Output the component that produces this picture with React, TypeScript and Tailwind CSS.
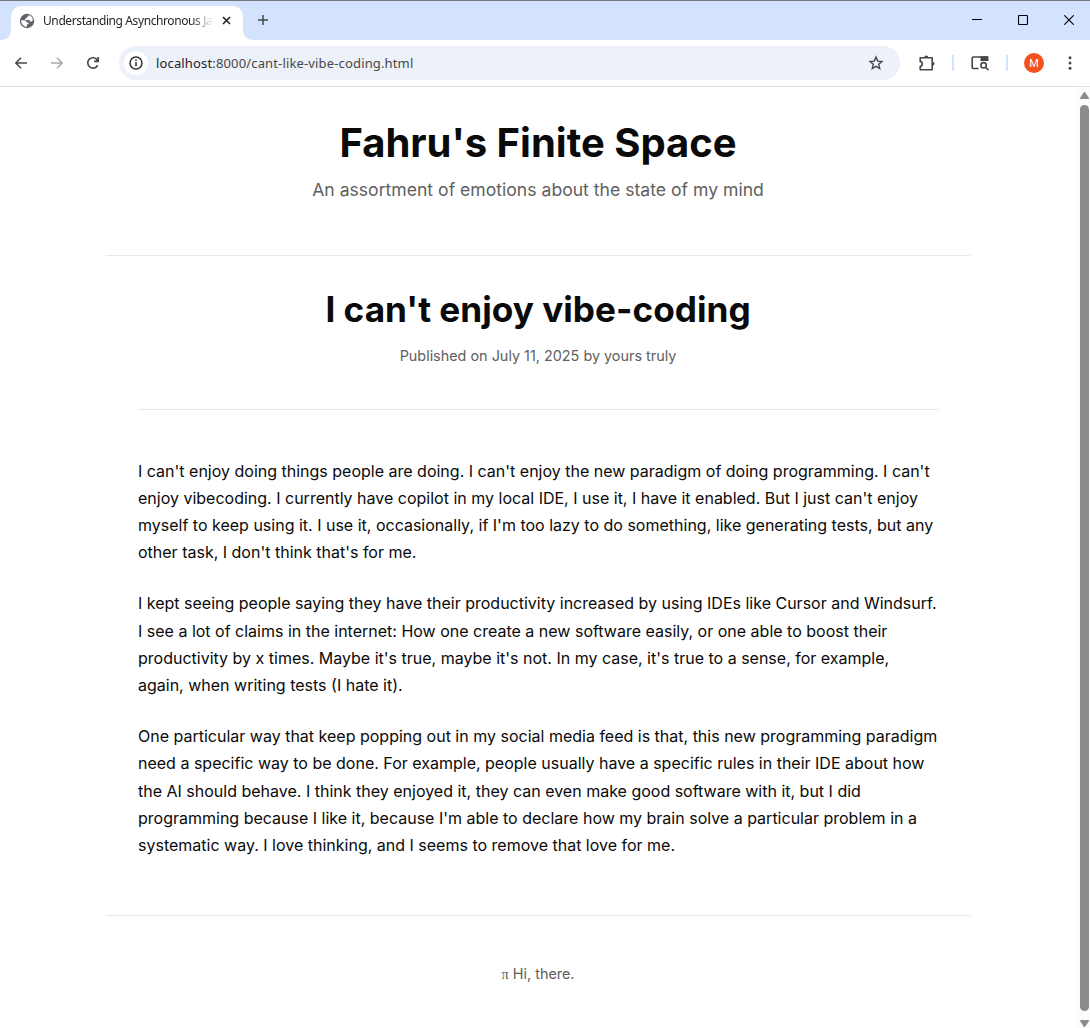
import React from "react";

const paragraphs: string[][] = [
  [
    "I can't enjoy doing things people are doing. I can't enjoy the new paradigm of doing programming. I can't",
    "enjoy vibecoding. I currently have copilot in my local IDE, I use it, I have it enabled. But I just can't enjoy",
    "myself to keep using it. I use it, occasionally, if I'm too lazy to do something, like generating tests, but any",
    "other task, I don't think that's for me.",
  ],
  [
    "I kept seeing people saying they have their productivity increased by using IDEs like Cursor and Windsurf.",
    "I see a lot of claims in the internet: How one create a new software easily, or one able to boost their",
    "productivity by x times. Maybe it's true, maybe it's not. In my case, it's true to a sense, for example,",
    "again, when writing tests (I hate it).",
  ],
  [
    "One particular way that keep popping out in my social media feed is that, this new programming paradigm",
    "need a specific way to be done. For example, people usually have a specific rules in their IDE about how",
    "the AI should behave. I think they enjoyed it, they can even make good software with it, but I did",
    "programming because I like it, because I'm able to declare how my brain solve a particular problem in a",
    "systematic way. I love thinking, and I seems to remove that love for me.",
  ],
];

function TabStrip() {
  return (
    <div className="flex h-10 shrink-0 items-end border-t border-[#747780] bg-[#d3e2fd]">
      <svg width="11" height="10" className="shrink-0" viewBox="0 0 11 10">
        <path d="M11 0v10H0c7 0 11-4 11-10z" fill="#fff" />
      </svg>
      <div className="flex h-[34px] w-[232px] items-center rounded-t-[10px] bg-white pr-[10px] pl-2 pb-[5px]">
        <svg width="16" height="16" viewBox="0 0 16 16" className="shrink-0">
          <circle cx="8" cy="8" r="7.2" fill="#5f6368" />
          <path d="M9.7 2.1c-.1 1.3-.8 1.9-2 1.9v1.5H6v1.4h3.4c1 0 1.5.6 1.5 1.5h1.2c1 0 1.6-.6 1.8-1.5A6 6 0 0 0 9.7 2.1z" fill="#fff" />
          <path d="M2.2 7.2h2.9c1.6 0 2.7.9 2.7 2.4h1.7v1.7H7.9v2.6A6 6 0 0 1 2.2 7.2z" fill="#fff" />
        </svg>
        <div className="ml-2 w-[169px] whitespace-nowrap bg-linear-to-r from-[#1f1f1f] from-88% to-[#1f1f1f]/5 bg-clip-text font-['Noto_Sans',sans-serif] text-[12px] leading-[18px] tracking-[-0.4px] text-transparent">
          Understanding Asynchronous Ja
        </div>
        <svg width="9" height="9" viewBox="0 0 9 9" className="ml-auto mr-[2px] shrink-0">
          <path d="M1 1l7 7M8 1L1 8" stroke="#202124" strokeWidth="1.6" />
        </svg>
      </div>
      <svg width="10" height="10" className="shrink-0" viewBox="0 0 10 10">
        <path d="M0 0v10h10C4 10 0 6 0 0z" fill="#fff" />
      </svg>
      <svg width="12" height="12" viewBox="0 0 12 12" className="mb-[14px] ml-1 shrink-0">
        <path d="M6 1v10M1 6h10" stroke="#44474d" strokeWidth="1.5" />
      </svg>
      <div className="mb-[15px] ml-auto mr-[16px] flex items-center gap-9 text-black">
        <svg width="10" height="11" viewBox="0 0 10 11"><path d="M0 5.5h10" stroke="currentColor" shapeRendering="crispEdges" /></svg>
        <svg width="10" height="10" viewBox="0 0 10 10"><rect x=".5" y=".5" width="9" height="9" rx="1" fill="none" stroke="currentColor" strokeWidth="1.1" /></svg>
        <svg width="10" height="10" viewBox="0 0 10 10"><path d="M.3.3l9.4 9.4m0-9.4L.3 9.7" stroke="currentColor" strokeWidth="1.1" /></svg>
      </div>
    </div>
  );
}

function Toolbar() {
  return (
    <div className="flex h-[47px] shrink-0 items-center border-b border-[#dfe1e4] bg-white pl-[15px] text-[#474747]">
      <svg width="12" height="12" viewBox="0 0 12 12" fill="none" stroke="currentColor" strokeWidth="1.5"><path d="M12 6H1M6 .7L.9 6 6 11.3" /></svg>
      <svg width="12" height="12" viewBox="0 0 12 12" className="ml-6" fill="none" stroke="#a9a9a9" strokeWidth="1.5"><path d="M0 6h11M6 .7L11.1 6 6 11.3" /></svg>
      <svg width="14" height="14" viewBox="0 0 14 14" className="ml-[23px]" fill="none" stroke="currentColor" strokeWidth="1.6"><path d="M11.7 9.1A5.2 5.2 0 1 1 11.3 4L12 4.9M12.2 1v4.4H8" /></svg>
      <div className="ml-[19px] flex h-[34px] w-[781px] items-center rounded-full bg-[#ecf1fa] pr-4 pl-[5px]">
        <div className="flex size-6 items-center justify-center rounded-full bg-white">
          <svg width="14" height="14" viewBox="0 0 14 14" fill="none" stroke="#303134" strokeWidth="1.5"><circle cx="7" cy="7" r="6" /><path d="M7 6v4.2M7 3.6v1.5" /></svg>
        </div>
        <div className="ml-[8px] whitespace-nowrap font-['Noto_Sans',sans-serif] text-[13px] leading-5 tracking-[0.15px] text-[#474747]"><span className="text-[#1f1f1f]">localhost</span>:8000/cant-like-vibe-coding.html</div>
        <svg width="16" height="16" viewBox="0 0 16 16" className="ml-auto" fill="none" stroke="currentColor" strokeWidth="1.4"><path d="M8 2.1l1.7 4 4.3.4-3.3 2.8 1 4.2L8 11.3l-3.7 2.2 1-4.2L2 6.5l4.3-.4z" /></svg>
      </div>
      <svg width="18" height="18" viewBox="0 0 18 18" className="ml-[18px]" fill="none">
        <path d="M2.2 3.8H14.2V15.8H2.2V12.4C4.9 12 4.9 7.8 2.2 7.4Z" stroke="currentColor" strokeWidth="1.6" strokeLinejoin="round" />
        <path d="M6.3 3.5a2 2 0 0 1 4 0zM14.5 7.7a2 2 0 0 1 0 4z" fill="currentColor" />
      </svg>
      <div className="ml-[16px] h-4 w-0.5 bg-[#d3e2fd]" />
      <svg width="18" height="16" viewBox="0 0 18 16" className="ml-[17px]" fill="none" stroke="currentColor" strokeWidth="1.6">
        <path d="M7.5 13.5H2.2a1 1 0 0 1-1-1V3a1 1 0 0 1 1-1H16.5v4" />
        <path d="M9.5 1.3H17.2V6H9.5z" fill="currentColor" stroke="none" />
        <circle cx="12.6" cy="10.3" r="2.7" /><path d="M14.5 12.2l3 3" />
      </svg>
      <div className="ml-[17px] h-4 w-0.5 bg-[#d3e2fd]" />
      <div className="ml-4 flex size-5 items-center justify-center rounded-full bg-[#f4511e] font-[Roboto,sans-serif] text-[11px] leading-none text-white">M</div>
      <svg width="4" height="14" viewBox="0 0 4 14" className="ml-6" fill="currentColor"><circle cx="2" cy="1.7" r="1.5" /><circle cx="2" cy="7" r="1.5" /><circle cx="2" cy="12.3" r="1.5" /></svg>
    </div>
  );
}

function Scrollbar() {
  return (
    <div className="flex w-[14px] shrink-0 flex-col items-end bg-[#fcfcfc] pt-[5px] pr-[1px] pb-[1px]">
      <svg width="9" height="7" viewBox="0 0 9 7"><path d="M3.5.7a1.2 1.2 0 0 1 2 0L9 6q.2 1-.7 1H.7Q-.2 7 0 6z" fill="#8b8b8b" /></svg>
      <div className="mt-[6px] w-[9px] flex-1 rounded-full bg-[#8b8b8b]" />
      <svg width="9" height="7" viewBox="0 0 9 7" className="mt-[9px]"><path d="M3.5 6.3a1.2 1.2 0 0 0 2 0L9 1q.2-1-.7-1H.7Q-.2 0 0 1z" fill="#8b8b8b" /></svg>
    </div>
  );
}

export default function App() {
  return (
    <div className="flex h-[1028px] w-[1090px] flex-col overflow-hidden bg-white">
      <TabStrip />
      <Toolbar />
      <div className="flex min-h-0 flex-1">
        <div className="min-w-0 flex-1 font-[Inter,sans-serif] text-[#0a0a0a]">
          <div className="mx-auto w-[864px]">
            <header className="h-[169px] border-b border-[#e8e8e8] pt-8 text-center">
              <h1 className="text-[40px] leading-[48px] font-bold">Fahru's Finite Space</h1>
              <p className="mt-2 text-[17.6px] leading-[30px] text-[#606060]">An assortment of emotions about the state of my mind</p>
            </header>
            <main className="px-8">
              <div className="h-[154px] border-b border-[#e8e8e8] pt-8 text-center">
                <h2 className="text-[35.2px] leading-[43px] font-bold">I can't enjoy vibe-coding</h2>
                <p className="mt-[13px] text-[14.4px] leading-6 text-[#606060]">Published on July 11, 2025 by yours truly</p>
              </div>
              <article className="flex flex-col gap-6 pt-[47.5px] text-[16px] leading-[27.2px] whitespace-nowrap">
                {paragraphs.map((lines) => (
                  <p key={lines[0]}>
                    {lines.map((line) => <span key={line} className="block">{line}</span>)}
                  </p>
                ))}
              </article>
            </main>
            <footer className="mt-[55.7px] border-t border-[#e8e8e8] pt-[46px] text-center text-[14.4px] leading-6 text-[#606060]">
              <span className="font-['Liberation_Serif',serif]">π</span> Hi, there.
            </footer>
          </div>
        </div>
        <Scrollbar />
      </div>
    </div>
  );
}
